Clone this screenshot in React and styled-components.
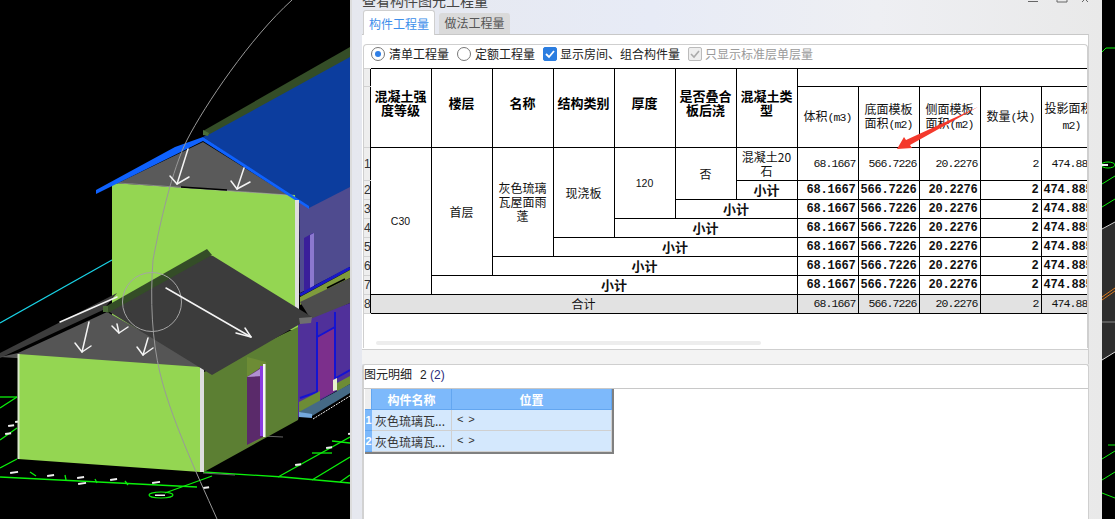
import React from 'react'
import styled, { createGlobalStyle } from 'styled-components'

const GlobalStyle = createGlobalStyle`
  html, body { margin: 0; padding: 0; background: #000; }
  body { font-family: "Noto Sans CJK SC", "Liberation Sans", sans-serif; }
`

const Page = styled.div`
  display: flex;
  width: 1115px;
  height: 519px;
  overflow: hidden;
  background: #000;
`

const Scene = styled.svg`
  display: block;
  flex: none;
  width: ${p => p.width}px;
  height: 519px;
`

const Win = styled.div`
  position: relative;
  flex: none;
  box-sizing: border-box;
  width: 752px;
  height: 519px;
  padding: 0 13px 0 10px;
  overflow: hidden;
  background: linear-gradient(90deg, #e6e8ef 0, #e7ebf6 40%, #eeeff3 70%, #e9e9e9 100%);
  border-left: 2px solid #dcdcdc;
`

const TitleBar = styled.div`
  display: flex;
  justify-content: space-between;
  height: 10px;
  overflow: hidden;
`

const WinTitle = styled.div`
  font-size: 14px;
  line-height: 14px;
  margin-top: -7px;
  color: #444;
`

const WinButtons = styled.div`
  display: flex;
  align-items: flex-start;
  margin: -1px -1px 0 0;
`

const TabRow = styled.div`
  display: flex;
  align-items: flex-end;
  height: 24px;
  gap: 4px;
  padding-left: 1px;
`

const Tab = styled.div`
  box-sizing: border-box;
  width: ${p => (p.$active ? 72 : 71)}px;
  height: ${p => (p.$active ? 25 : 21)}px;
  margin-bottom: ${p => (p.$active ? -1 : 0)}px;
  position: relative;
  z-index: 1;
  text-align: center;
  font-size: 12px;
  line-height: ${p => (p.$active ? 25 : 20)}px;
  border-radius: 3px 3px 0 0;
  color: ${p => (p.$active ? '#3d8eea' : '#555')};
  background: ${p => (p.$active ? '#fff' : '#dadada')};
  border: ${p => (p.$active ? '1px solid #cfcfcf' : 'none')};
  border-bottom: none;
`

const Panel = styled.div`
  box-sizing: border-box;
  height: 316px;
  padding: 10px 0 0;
  background: #fff;
  border-top: 1px solid #c8c8c8;
  border-right: 1px solid #cfcfcf;
  border-bottom: 1px solid #cfcfcf;
`

const InnerBox = styled.div`
  box-sizing: border-box;
  height: 304px;
  margin: -1px 0 0 1px;
  background: #fff;
  border: 1px solid #cfcfcf;
  border-bottom: none;
  border-radius: 4px 4px 0 0;
`

const Options = styled.div`
  box-sizing: border-box;
  display: flex;
  align-items: center;
  height: 23px;
  padding: 0 0 6px 7px;
  font-size: 12px;
  color: #222;
`

const Option = styled.label`
  display: flex;
  align-items: center;
  gap: ${p => p.$gap || 4}px;
  margin-right: 8px;
  color: ${p => (p.$muted ? '#9a9a9a' : '#222')};
`

const Radio = styled.span`
  box-sizing: border-box;
  display: flex;
  align-items: center;
  justify-content: center;
  width: 14px;
  height: 14px;
  border: 1px solid #777;
  border-radius: 50%;
  &::after {
    content: '';
    width: 6px;
    height: 6px;
    border-radius: 50%;
    background: ${p => (p.$on ? '#2f7fe6' : 'transparent')};
  }
`

const Check = styled.span`
  box-sizing: border-box;
  display: flex;
  align-items: center;
  justify-content: center;
  width: 14px;
  height: 14px;
  border-radius: 2px;
  background: ${p => (p.$off ? '#eee' : '#2b7de0')};
  border: 1px solid ${p => (p.$off ? '#bbb' : '#2b7de0')};
`

const TableClip = styled.div`
  height: 273px;
  overflow: hidden;
`

const Table = styled.table`
  table-layout: fixed;
  border-collapse: collapse;
  width: 677px;
  font-size: 12px;
  color: #111;
  & col.idx { width: 6px; }
  & col.data { width: 61px; }
`

const Idx = styled.td`
  box-sizing: border-box;
  padding: 0;
  overflow: hidden;
  background: #eeeeee;
  border-top: 1px solid #d2d2d2;
  border-bottom: 1px solid #d2d2d2;
  font: 12px/14px "Liberation Sans", sans-serif;
  color: #333;
  height: ${p => p.$h || 18}px;
`

const Th = styled.th`
  padding: 0 1px 10px;
  border: 1px solid #000;
  font-size: 13px;
  line-height: 14px;
  font-weight: 700;
  color: #000;
`

const SubTh = styled.th`
  padding: 0;
  border: 1px solid #000;
  font-size: 12px;
  line-height: 14px;
  font-weight: 400;
  color: #111;
  white-space: nowrap;
  overflow: hidden;
`

const Td = styled.td`
  padding: 0 ${p => (p.$narrow ? 6 : 0)}px;
  border: 1px solid #000;
  text-align: center;
  line-height: 14px;
  font-size: 12px;
  background: ${p => (p.$total ? '#e2e2e2' : '#fff')};
  font-weight: ${p => (p.$bold ? 700 : 400)};
  ${p => p.$bold && 'font-size: 13px;'}
  ${p => p.$latin && 'font: 10.5px/14px "Liberation Sans", sans-serif;'}
`

const Num = styled.td`
  padding: 0 2px 0 0;
  border: 1px solid #000;
  text-align: right;
  white-space: nowrap;
  overflow: hidden;
  line-height: 14px;
  background: ${p => (p.$total ? '#e2e2e2' : '#fff')};
  font-family: "Liberation Mono", monospace;
  font-size: ${p => (p.$bold ? 12 : 11.5)}px;
  font-weight: ${p => (p.$bold ? 700 : 400)};
  letter-spacing: ${p => (p.$bold ? -0.2 : -0.9)}px;
`

const Mono = styled.span`
  font-family: "Liberation Mono", monospace;
  font-size: 11.5px;
  letter-spacing: -0.9px;
`

const ScrollTrack = styled.div`
  width: 385px;
  height: 4px;
  margin: 0 0 0 12px;
  border-radius: 2px;
  background: #ededed;
`

const Gap = styled.div`
  height: 14px;
  background: #f3f3f3;
  border-right: 1px solid #cfcfcf;
`

const DetailPanel = styled.div`
  box-sizing: border-box;
  height: 155px;
  background: #fff;
  border-top: 1px solid #cfcfcf;
  border-left: 2px solid #d2d2d2;
  border-right: 1px solid #cfcfcf;
  border-radius: 3px 3px 0 0;
`

const DetailTitle = styled.div`
  box-sizing: border-box;
  height: 24px;
  font-size: 12px;
  line-height: 18px;
  color: #222;
  border-bottom: 1px solid #c8c8c8;
  & span { margin-left: 8px; font-family: "Liberation Sans", sans-serif; font-size: 12px; }
  & b { font-weight: 400; color: #2c2c7c; }
`

const Grid = styled.table`
  table-layout: fixed;
  border-collapse: separate;
  border-spacing: 0;
  width: 249px;
  margin-left: 1px;
  font-size: 12px;
  border-right: 2px solid #808080;
  border-bottom: 2px solid #808080;
  & col.idx { width: 7px; }
  & col.name { width: 80px; }
`

const GridHead = styled.th`
  height: 20px;
  padding: 0;
  font-size: 12px;
  font-weight: 700;
  color: #fff;
  background: ${p => (p.$blank ? '#eeeeee' : '#7db9fb')};
  border-bottom: 1px solid #63a6f0;
  border-right: 1px solid #63a6f0;
`

const GridIdx = styled.td`
  padding: 0;
  overflow: hidden;
  background: #7db9fb;
  color: #fff;
  font: 700 11px/20px "Liberation Sans", sans-serif;
  text-align: center;
  border-bottom: 1px solid #63a6f0;
`

const GridCell = styled.td`
  height: 20px;
  padding: 0 0 0 3px;
  background: #d4e8fd;
  color: #333;
  overflow: hidden;
  white-space: nowrap;
  border-right: 1px solid #d0d0d0;
  border-bottom: 1px solid #d0d0d0;
  ${p => p.$code && 'padding-left: 5px; font: 11px "Liberation Mono", monospace; letter-spacing: -1px;'}
`

const Annotation = styled.svg`
  position: absolute;
  left: -2px;
  top: 0;
  pointer-events: none;
`

const Arrow = ({ from, to, head, w = 1.5 }) => (
  <g fill="none" stroke="#f4f4f4" strokeWidth={w} strokeLinecap="round" strokeLinejoin="round">
    <line x1={from[0]} y1={from[1]} x2={to[0]} y2={to[1]} />
    {head && <polyline points={`${head[0]} ${to.join(' ')} ${head[1]}`} />}
  </g>
)

const sceneArrows = [
  { from: [188, 149], to: [177, 184], head: ['170 176', '189 177'] },
  { from: [244, 168], to: [237, 189], head: ['231 181', '250 182'] },
  { from: [89, 322], to: [82, 352], head: ['75 343', '91 346'] },
  { from: [117, 324], to: [119, 333], head: ['112 326', '128 327'] },
  { from: [148, 338], to: [143, 355], head: ['137 347', '153 348'] },
  { from: [166, 288], to: [251, 337], head: ['236 333', '245 328'] },
  { from: [60, 322], to: [117, 297] },
]

const gridLines = [
  '0 477 197 487', '0 468 17 459', '203 472 283 477', '283 477 350 483',
  '278 477 350 437', '312 480 350 457', '340 482 350 475', '312 453 332 453',
  '332 441 350 443', '0 397 17 397', '0 408 17 397', '0 440 17 428',
  '165 493 212 476', '30 472 36 476', '65 475 66 480', '95 479 97 483', '125 481 128 485',
]

const dashes = [
  [10, 472, 8], [47, 475, 7], [77, 477, 7], [110, 479, 7], [152, 482, 8], [78, 483, 8],
  [203, 487, 6], [295, 464, 6], [326, 447, 6], [348, 433, 4], [8, 425, 6], [5, 433, 6], [15, 421, 4],
]

const LeftScene = () => (
  <Scene width={350} viewBox="0 0 350 519">
    <line x1="0" y1="323" x2="112" y2="260" stroke="#19d3e6" strokeWidth="1.2" />
    {gridLines.map(l => {
      const [x1, y1, x2, y2] = l.split(' ')
      return <line key={l} x1={x1} y1={y1} x2={x2} y2={y2} stroke="#0bf00b" strokeWidth="1.3" />
    })}
    {dashes.map(([x, y, w]) => (
      <rect key={`${x}-${y}`} x={x} y={y} width={w} height="2" fill="#eee" transform={`rotate(-8 ${x} ${y})`} />
    ))}
    <ellipse cx="161" cy="495" rx="12" ry="3" fill="none" stroke="#0bf00b" strokeWidth="1.2" />
    <rect x="155" y="494.5" width="10" height="1.5" fill="#eee" />
    <line x1="203" y1="473" x2="235" y2="475" stroke="#666" />
    <line x1="263" y1="436" x2="283" y2="437" stroke="#666" />

    <polygon points="299,190 350,170 350,267 300,293" fill="#4f4b8f" />
    <polygon points="304,238 313,233 313,287 304,292" fill="#3a1f9a" />
    <polygon points="310,235 314,233 314,286 310,288" fill="#8b78cf" />
    <line x1="300" y1="295" x2="350" y2="268" stroke="#1818c8" strokeWidth="3" />
    <polygon points="300,297 350,270 350,278 300,305" fill="#7f9b3c" />
    <polygon points="300,302 350,278 350,303 312,321" fill="#4d4d4d" />
    <line x1="327" y1="288" x2="345" y2="279" stroke="#000" strokeWidth="1.6" />

    <polygon points="298,324 350,303 350,383 300,412 298,420" fill="#50309a" />
    <polygon points="318,337 334,328 334,392 318,400" fill="#7c2f8c" />
    <g stroke="#1414d2" strokeWidth="2" fill="none">
      <line x1="317" y1="322" x2="317" y2="394" />
      <line x1="335" y1="312" x2="335" y2="390" />
      <line x1="317" y1="337" x2="335" y2="327" />
      <line x1="300" y1="398" x2="317" y2="392" />
      <line x1="336" y1="378" x2="350" y2="370" />
    </g>
    <polygon points="333,380 337,378 337,390 333,391" fill="#e8f0d0" />
    <polygon points="299,402 320,391 320,402 299,414" fill="#6d8c35" />
    <polygon points="337,383 350,376 350,384 337,392" fill="#6d8c35" />
    <polygon points="299,412 350,384 350,393 312,416" fill="#456a86" />
    <polygon points="299,412 312,414 312,418 299,417" fill="#74a8dc" />
    <polyline points="313,419 350,396" stroke="#eee" fill="none" strokeDasharray="2 1" />

    <polygon points="203,137 350,52 350,187 309,208" fill="#0c3d9e" />
    <polygon points="203,131 350,47 350,57 208,135" fill="#344d27" />
    <polygon points="203,130 209,133 208,136 203,135" fill="#4a6d37" />
    <polygon points="112,183 295,195 298,255 298,330 112,330" fill="#94d652" />
    <polygon points="118,183 203,142 288,195" fill="#5a5a5a" />
    <line x1="118" y1="183" x2="288" y2="195" stroke="#aaa" strokeWidth="0.7" />
    <line x1="181" y1="187" x2="227" y2="190" stroke="#000" strokeWidth="1.4" />
    <polygon points="96,190 175,147 203,137 309,206 309,209 203,141 96,194" fill="#0f62fe" />
    <rect x="295" y="200" width="4" height="115" fill="#dedede" />

    <polygon points="0,353 117,293 103,310 0,358" fill="#3c3c3c" />
    <polygon points="107,312 18,353 0,357 203,370 212,370" fill="#555" />
    <polygon points="18,354 200,367 200,472 18,459" fill="#94d652" />
    <rect x="17.5" y="354" width="2" height="105" fill="#d8e8c8" />
    <polygon points="200,367 204,367 204,472 200,472" fill="#dedede" />
    <polygon points="204,372 298,327 298,420 204,472" fill="#5c7f33" />
    <polygon points="247,357 266,362 266,437 247,445" fill="#6d8c35" />
    <polygon points="247,377 263,366 263,437 247,445" fill="#5a2a6a" />
    <polygon points="247,377 263,367 263,376 247,377" fill="#b090d0" />
    <rect x="260" y="366" width="3" height="70" fill="#8a3ce0" />
    <rect x="263" y="364" width="2.5" height="73" fill="#f4f4f4" />
    <polygon points="108,311 205,254 213,256 312,317 212,375" fill="#3c3c3c" />
    <polygon points="103,308 207,249 212,255 108,313" fill="#344d27" />
    <polygon points="299,318 312,317 311,323 300,324" fill="#6f6f6f" />
    <polygon points="103,306 108,306 108,312 103,312" fill="#4a6d37" />

    <path d="M292 0 C250 38 205 105 187 140 C172 170 160 223 153 260 C150 300 152 340 160 373 C170 415 195 470 217 519" fill="none" stroke="#999" strokeWidth="1" />
    <circle cx="152" cy="302" r="29.5" fill="none" stroke="#a5a5a5" strokeWidth="1" />
    {sceneArrows.map(a => <Arrow key={a.from.join()} {...a} />)}
  </Scene>
)

const RightScene = () => (
  <Scene width={13} viewBox="1102 0 13 519">
    <g stroke="#0bf00b" strokeWidth="1" fill="none">
      <path d="M1102 52 L1106 48 L1115 48" />
      <ellipse cx="1108" cy="165" rx="7" ry="3" />
      <path d="M1102 184 L1115 176" />
      <path d="M1102 207 L1115 199" />
      <path d="M1102 331 L1115 331" />
      <path d="M1108 445 L1115 445" />
      <path d="M1102 459 L1115 451" />
      <path d="M1102 480 L1115 472" />
      <path d="M1102 493 L1115 498" />
    </g>
    <rect x="1102" y="164" width="6" height="2" fill="#eee" />
    <polygon points="1102,229 1115,222 1115,352 1102,360" fill="#2e2e2e" />
    <path d="M1102 229 L1115 222" stroke="#ccc" />
    <path d="M1102 297 L1115 288 M1102 300 L1115 291" stroke="#d97a20" />
    <path d="M1102 322 L1115 322" stroke="#888" />
    <path d="M1102 360 L1115 352" stroke="#ddd" />
  </Scene>
)

const values = ['68.1667', '566.7226', '20.2276', '2', '474.8855']

const Values = ({ bold, total }) => values.map(v => <Num key={v} $bold={bold} $total={total}>{v}</Num>)

const subtotalSpans = [1, 2, 3, 4, 5, 6]

const QuantityTable = () => (
  <Table>
    <colgroup>
      <col className="idx" />
      {Array.from({ length: 12 }, (_, i) => <col key={i} className="data" />)}
    </colgroup>
    <tbody>
      <tr>
        <Idx $h={18} />
        <Th rowSpan={2}>混凝土强度等级</Th>
        <Th rowSpan={2}>楼层</Th>
        <Th rowSpan={2}>名称</Th>
        <Th rowSpan={2}>结构类别</Th>
        <Th rowSpan={2}>厚度</Th>
        <Th rowSpan={2}>是否叠合板后浇</Th>
        <Th rowSpan={2}>混凝土类型</Th>
        <SubTh colSpan={5} />
      </tr>
      <tr>
        <Idx $h={61} />
        <SubTh>体积<Mono>(m3)</Mono></SubTh>
        <SubTh>底面模板<br />面积<Mono>(m2)</Mono></SubTh>
        <SubTh>侧面模板<br />面积<Mono>(m2)</Mono></SubTh>
        <SubTh>数量<Mono>(</Mono>块<Mono>)</Mono></SubTh>
        <SubTh>投影面积<Mono>(</Mono><br /><Mono>m2)</Mono></SubTh>
      </tr>
      <tr>
        <Idx $h={33}>1</Idx>
        <Td rowSpan={7} $latin>C30</Td>
        <Td rowSpan={6}>首层</Td>
        <Td rowSpan={5} $narrow>灰色琉璃瓦屋面雨蓬</Td>
        <Td rowSpan={4}>现浇板</Td>
        <Td rowSpan={3} $latin>120</Td>
        <Td rowSpan={2}>否</Td>
        <Td>混凝土20石</Td>
        <Values />
      </tr>
      {subtotalSpans.map(span => (
        <tr key={span}>
          <Idx $h={19}>{span + 1}</Idx>
          <Td colSpan={span} $bold>小计</Td>
          <Values bold />
        </tr>
      ))}
      <tr>
        <Idx $h={19}>8</Idx>
        <Td colSpan={7} $total>合计</Td>
        <Values total />
      </tr>
    </tbody>
  </Table>
)

const App = () => (
  <Page>
    <GlobalStyle />
    <LeftScene />
    <Win>
      <TitleBar>
        <WinTitle>查看构件图元工程量</WinTitle>
        <WinButtons>
          <svg width="64" height="4" viewBox="0 0 64 4" fill="none" stroke="#666" strokeWidth="1">
            <path d="M2 2.5 H12" />
            <path d="M31 -4 H41 V3 H31 Z" />
            <path d="M56 -3 L62 3 M62 -3 L56 3" />
          </svg>
        </WinButtons>
      </TitleBar>
      <TabRow>
        <Tab $active>构件工程量</Tab>
        <Tab>做法工程量</Tab>
      </TabRow>
      <Panel>
        <InnerBox>
          <Options>
            <Option><Radio $on />清单工程量</Option>
            <Option><Radio />定额工程量</Option>
            <Option $gap={3}>
              <Check>
                <svg width="12" height="12" viewBox="0 0 12 12" fill="none" stroke="#fff" strokeWidth="1.8"><path d="M2 6 L5 9 L10 3" /></svg>
              </Check>
              显示房间、组合构件量
            </Option>
            <Option $gap={3} $muted>
              <Check $off>
                <svg width="12" height="12" viewBox="0 0 12 12" fill="none" stroke="#aaa" strokeWidth="1.6"><path d="M2 6 L5 9 L10 3" /></svg>
              </Check>
              只显示标准层单层量
            </Option>
          </Options>
          <TableClip><QuantityTable /></TableClip>
          <ScrollTrack />
        </InnerBox>
      </Panel>
      <Gap />
      <DetailPanel>
        <DetailTitle>图元明细<span>2 <b>(2)</b></span></DetailTitle>
        <Grid>
          <colgroup>
            <col className="idx" />
            <col className="name" />
            <col />
          </colgroup>
          <tbody>
            <tr>
              <GridHead $blank />
              <GridHead>构件名称</GridHead>
              <GridHead>位置</GridHead>
            </tr>
            {[1, 2].map(n => (
              <tr key={n}>
                <GridIdx>{n}</GridIdx>
                <GridCell>灰色琉璃瓦...</GridCell>
                <GridCell $code>{'< >'}</GridCell>
              </tr>
            ))}
          </tbody>
        </Grid>
      </DetailPanel>
      <Annotation width="752" height="519" viewBox="350 0 752 519">
        <polygon points="978,107 910,145 912,148 897,149 904,137 906,140" fill="#f4392c" />
      </Annotation>
    </Win>
    <RightScene />
  </Page>
)

export default App
